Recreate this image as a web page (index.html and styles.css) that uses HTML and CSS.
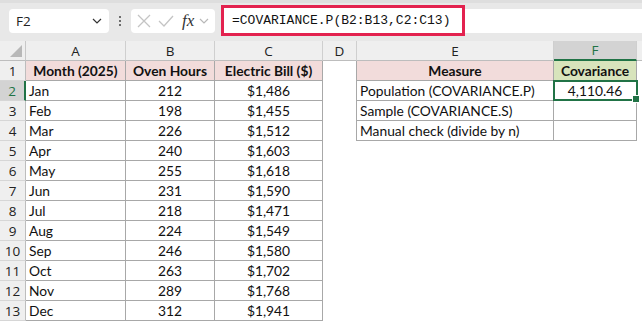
FILE: index.html
```html
<!DOCTYPE html>
<html>
<head>
<meta charset="utf-8">
<link rel="stylesheet" href="styles.css">
</head>
<body>
<div class="app">
  <div class="toolbar">
    <div class="namebox">
      <span class="nb-text">F2</span>
      <svg class="chev" width="12" height="8" viewBox="0 0 12 8"><path d="M2 2 L6 6 L10 2" fill="none" stroke="#333" stroke-width="1.2"/></svg>
    </div>
    <div class="dots"><span></span><span></span><span></span></div>
    <div class="fxbox">
      <svg width="16" height="16" viewBox="0 0 16 16"><path d="M2 2 L14 14 M14 2 L2 14" stroke="#c4c4c4" stroke-width="1.3"/></svg>
      <svg width="18" height="16" viewBox="0 0 18 16"><path d="M2 8 L7 13 L16 3" fill="none" stroke="#c4c4c4" stroke-width="1.3"/></svg>
      <span class="fx">fx</span>
      <svg width="10" height="8" viewBox="0 0 10 8"><path d="M1 2 L5 6 L9 2" fill="none" stroke="#b8b8b8" stroke-width="1.2"/></svg>
    </div>
    <div class="formula">
      <span class="formula-text">=COVARIANCE.P(B2:B13,C2:C13)</span>
    </div>
  </div>

  <div class="sheet">
    <div class="corner"><span class="tri"></span></div>
    <div class="hc">A</div><div class="hc">B</div><div class="hc">C</div><div class="hc">D</div><div class="hc">E</div><div class="hc hc-sel">F</div><div class="hc hc-end"></div>

    <div class="rh">1</div>
    <div class="t th pink">Month (2025)</div><div class="t th pink">Oven Hours</div><div class="t th pink">Electric Bill ($)</div>
    <div class="d"></div><div class="t th pink">Measure</div><div class="t th green">Covariance</div><div class="e"></div>

    <div class="rh rh-sel">2</div>
    <div class="t l">Jan</div><div class="t ctr">212</div><div class="t ctr">$1,486</div>
    <div class="d"></div><div class="t l">Population (COVARIANCE.P)</div><div class="t ctr sel">4,110.46</div><div class="e"></div>

    <div class="rh">3</div>
    <div class="t l">Feb</div><div class="t ctr">198</div><div class="t ctr">$1,455</div>
    <div class="d"></div><div class="t l">Sample (COVARIANCE.S)</div><div class="t ctr"></div><div class="e"></div>

    <div class="rh">4</div>
    <div class="t l">Mar</div><div class="t ctr">226</div><div class="t ctr">$1,512</div>
    <div class="d"></div><div class="t l">Manual check (divide by n)</div><div class="t ctr"></div><div class="e"></div>

    <div class="rh">5</div>
    <div class="t l">Apr</div><div class="t ctr">240</div><div class="t ctr">$1,603</div>
    <div class="x"></div><div class="x"></div><div class="x"></div><div class="x"></div>

    <div class="rh">6</div>
    <div class="t l">May</div><div class="t ctr">255</div><div class="t ctr">$1,618</div>
    <div class="x"></div><div class="x"></div><div class="x"></div><div class="x"></div>

    <div class="rh">7</div>
    <div class="t l">Jun</div><div class="t ctr">231</div><div class="t ctr">$1,590</div>
    <div class="x"></div><div class="x"></div><div class="x"></div><div class="x"></div>

    <div class="rh">8</div>
    <div class="t l">Jul</div><div class="t ctr">218</div><div class="t ctr">$1,471</div>
    <div class="x"></div><div class="x"></div><div class="x"></div><div class="x"></div>

    <div class="rh">9</div>
    <div class="t l">Aug</div><div class="t ctr">224</div><div class="t ctr">$1,549</div>
    <div class="x"></div><div class="x"></div><div class="x"></div><div class="x"></div>

    <div class="rh">10</div>
    <div class="t l">Sep</div><div class="t ctr">246</div><div class="t ctr">$1,580</div>
    <div class="x"></div><div class="x"></div><div class="x"></div><div class="x"></div>

    <div class="rh">11</div>
    <div class="t l">Oct</div><div class="t ctr">263</div><div class="t ctr">$1,702</div>
    <div class="x"></div><div class="x"></div><div class="x"></div><div class="x"></div>

    <div class="rh">12</div>
    <div class="t l">Nov</div><div class="t ctr">289</div><div class="t ctr">$1,768</div>
    <div class="x"></div><div class="x"></div><div class="x"></div><div class="x"></div>

    <div class="rh">13</div>
    <div class="t l">Dec</div><div class="t ctr">312</div><div class="t ctr">$1,941</div>
    <div class="x"></div><div class="x"></div><div class="x"></div><div class="x"></div>
  </div>
</div>
</body>
</html>
```

FILE: styles.css
```css
* { box-sizing: border-box; }
html, body { margin: 0; padding: 0; background: #ffffff; }
body { width: 642px; height: 322px; overflow: hidden; font-family: "Lato", "Liberation Sans", sans-serif; }

.app { display: flex; flex-direction: column; }

.toolbar {
  height: 41px;
  background: #e8e8e8;
  border-top: 3px solid #dedede;
  display: flex;
  align-items: center;
  padding-left: 9px;
}
.namebox {
  width: 100px; height: 24px;
  margin-top: -3px;
  background: #fff;
  border-radius: 4px;
  display: flex; align-items: center; justify-content: space-between;
  padding: 0 6px 0 7px;
  font-family: "Open Sans", "Noto Sans", sans-serif;
  font-size: 13.5px; color: #222;
}
.dots { width: 22px; display: flex; flex-direction: column; align-items: center; gap: 2px; margin-top: -3px; }
.dots span { width: 2px; height: 2px; background: #444; border-radius: 1px; }
.fxbox {
  width: 84px; height: 24px;
  margin-top: -3px;
  background: #fff;
  border-radius: 4px;
  display: flex; align-items: center; gap: 5px;
  padding: 0 4px 0 5px;
}
.fx { font-family: "Liberation Serif", serif; font-style: italic; font-size: 17px; color: #333; margin-left: 2px; line-height: 1; }
.formula {
  flex: 1;
  height: 24px;
  margin-top: -3px;
  margin-left: 7px;
  background: #fff;
  display: flex; align-items: center;
}
.formula-text {
  display: flex; align-items: center;
  height: 31px;
  width: 244px;
  border: 3px solid #e3224f;
  padding-left: 8px;
  font-family: "Liberation Mono", monospace;
  font-size: 13px;
  color: #111;
  background: #fff;
  margin-left: -1px;
}

.sheet {
  display: grid;
  grid-template-columns: 26px 100px 89px 108px 34px 197px 83px 5px;
  grid-template-rows: 20px repeat(13, 20px);
  font-size: 13.8px;
  color: #111;
}
.sheet > div { display: flex; align-items: center; overflow: hidden; white-space: nowrap; }

.corner { background: #efefef; border-right: 1px solid #c8c8c8; border-bottom: 1px solid #bdbdbd; position: relative; }
.tri { position: absolute; right: 3px; bottom: 3px; width: 0; height: 0; border-left: 12px solid transparent; border-bottom: 12px solid #b8b8b8; }

.hc {
  background: #efefef;
  border-right: 1px solid #cfcfcf;
  border-bottom: 1px solid #bdbdbd;
  justify-content: center;
  font-family: "Open Sans", "Noto Sans", sans-serif;
  font-size: 13.5px;
  color: #222;
}
.hc-sel { background: #d3d3d3; color: #217346; border-bottom: 2px solid #217346; }
.hc-end { border-right: none; }

.rh {
  background: #efefef;
  border-right: 1px solid #bdbdbd;
  border-bottom: 1px solid #d6d6d6;
  justify-content: center;
  font-family: "Open Sans", "Noto Sans", sans-serif;
  font-size: 13.5px;
  color: #222;
}
.rh-sel { background: #d3d3d3; color: #217346; border-right: 2px solid #217346; }

.t { border-right: 1px solid #a8a8a8; border-bottom: 1px solid #a8a8a8; }
.th { font-weight: bold; justify-content: center; }
.pink { background: #f2dcdb; }
.green { background: #d8e4bc; }
.l { padding-left: 3px; }
.ctr { justify-content: center; }
.d { border-right: 1px solid #a8a8a8; }
.sel { position: relative; overflow: visible !important; }
.sel::after {
  content: "";
  position: absolute;
  left: -1px; top: -1px; right: -2px; bottom: -1px;
  border: 2px solid #217346;
}
.sel::before {
  content: "";
  position: absolute;
  right: -4px; bottom: -3px;
  width: 6px; height: 6px;
  background: #217346;
  border: 1px solid #fff;
  z-index: 2;
}
```
